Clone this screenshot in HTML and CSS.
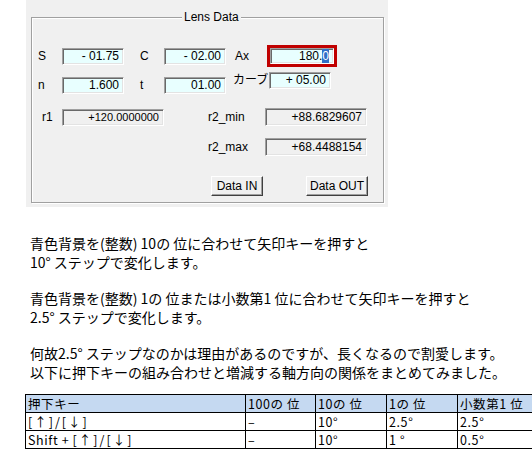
FILE: index.html
```html
<!DOCTYPE html>
<html lang="ja">
<head>
<meta charset="utf-8">
<title>Lens Data</title>
<link rel="stylesheet" href="styles.css">
</head>
<body>
<div class="dialog">
  <div class="group">
    <div class="legend">Lens Data</div>
    <div class="row row1">
      <span class="lbl l-s">S</span><span class="fld w62">- 01.75</span>
      <span class="lbl l-c">C</span><span class="fld w62">- 02.00</span>
      <span class="lbl l-ax">Ax</span>
      <span class="focus"><span class="fld full">180.<span class="sel">0</span></span></span>
    </div>
    <div class="row row2">
      <span class="lbl l-s">n</span><span class="fld w62">1.600</span>
      <span class="lbl l-c">t</span><span class="fld w62">01.00</span>
      <span class="lbl l-curve top">カーブ</span><span class="fld w62 top">+ 05.00</span>
    </div>
    <div class="row row3">
      <span class="lbl l-r1">r1</span><span class="fld ro w102 small">+120.0000000</span>
      <span class="lbl l-r2a">r2_min</span><span class="fld ro w102 tall">+88.6829607</span>
    </div>
    <div class="row row4">
      <span class="lbl l-r2b">r2_max</span><span class="fld ro w102 tall">+68.4488154</span>
    </div>
    <div class="row row5">
      <span class="btn b-in">Data IN</span>
      <span class="btn b-out">Data OUT</span>
    </div>
  </div>
</div>

<div class="notes">
  <p>青色背景を(整数) 10の 位に合わせて矢印キーを押すと<br>10° ステップで変化します。</p>
  <p>青色背景を(整数) 1の 位または小数第1 位に合わせて矢印キーを押すと<br>2.5° ステップで変化します。</p>
  <p>何故2.5° ステップなのかは理由があるのですが、長くなるので割愛します。<br>以下に押下キーの組み合わせと増減する軸方向の関係をまとめてみました。</p>
</div>

<table class="tbl">
  <colgroup>
    <col class="c1"><col class="c2"><col class="c3"><col class="c4"><col class="c5">
  </colgroup>
  <tr class="head"><td>押下キー</td><td>100の 位</td><td>10の 位</td><td>1の 位</td><td>小数第1 位</td></tr>
  <tr><td><span class="keys">[↑]/[↓]</span></td><td>–</td><td>10°</td><td>2.5°</td><td>2.5°</td></tr>
  <tr><td>Shift + <span class="keys">[↑]/[↓]</span></td><td>–</td><td>10°</td><td>1 °</td><td>0.5°</td></tr>
</table>
</body>
</html>
```
FILE: styles.css
```css
body {
  margin: 0;
  background: #fff;
  font-family: "Noto Sans CJK JP", sans-serif;
  color: #000;
}

.dialog {
  margin-left: 26px;
  width: 362px;
  height: 207px;
  background: #f0f0f0;
  padding: 17px 4px 0 5px;
  box-sizing: border-box;
}

.group {
  position: relative;
  height: 186px;
  border: 1px solid #a0a0a0;
  box-shadow: inset 1px 1px 0 #fff, 1px 1px 0 #fff;
  box-sizing: border-box;
  font-family: "Liberation Sans", "Noto Sans CJK JP", sans-serif;
  font-size: 12px;
}

.legend {
  position: absolute;
  left: 150px;
  top: -8px;
  padding: 0 2px;
  background: #f0f0f0;
  line-height: 15px;
  color: #000;
}

.row {
  display: flex;
  align-items: center;
}

.row1 { margin-top: 27px; height: 22px; }
.row2 { margin-top: 5px; height: 22px; align-items: flex-end; }
.row3 { margin-top: 14px; height: 18px; align-items: flex-end; }
.row4 { margin-top: 12px; height: 18px; }
.row5 { margin-top: 20px; height: 20px; }

.lbl {
  display: block;
  line-height: 17px;
  white-space: nowrap;
}
.top { align-self: flex-start; }

.l-s { margin-left: 6px; width: 24px; }
.l-c { margin-left: 16px; width: 24px; }
.l-ax { margin-left: 9px; width: 32px; }
.l-curve { margin-left: 7px; width: 36px; font-size: 12px; }
.l-r1 { margin-left: 10px; width: 20px; }
.l-r2a { margin-left: 44px; width: 57px; }
.l-r2b { margin-left: 176px; width: 57px; }

.fld {
  display: block;
  box-sizing: border-box;
  height: 17px;
  background: #e8ffff;
  border: 1px solid;
  border-color: #a0a0a0 #fff #fff #a0a0a0;
  box-shadow: inset 1px 1px 0 #696969, inset -1px -1px 0 #e3e3e3;
  text-align: right;
  padding-right: 4px;
  line-height: 15px;
  white-space: nowrap;
}
.w62 { width: 62px; }
.w102 { width: 102px; }
.ro { background: #f0f0f0; }
.tall { height: 18px; line-height: 16px; }
.small { font-size: 11px; }

.focus {
  display: block;
  box-sizing: border-box;
  width: 70px;
  height: 22px;
  border: 3px solid #c00000;
}
.full { height: 16px; width: 64px; }
.sel {
  background: #3070c8;
  color: #fff;
}

.btn {
  display: block;
  box-sizing: border-box;
  height: 20px;
  background: #f0f0f0;
  border: 1px solid;
  border-color: #fff #404040 #404040 #fff;
  box-shadow: inset -1px -1px 0 #a0a0a0;
  text-align: center;
  line-height: 18px;
}
.b-in { margin-left: 179px; width: 52px; }
.b-out { margin-left: 43px; width: 62px; }

.notes {
  margin: 27px 0 0 30px;
  font-size: 14px;
  line-height: 19px;
}
.notes p { margin: 0 0 17px; }
.notes p:last-child { margin-bottom: 0; }

.tbl {
  margin: 12px 0 0 25px;
  border-collapse: collapse;
  table-layout: fixed;
  width: 507px;
  font-size: 12.5px;
  letter-spacing: 0.6px;
}
.c1 { width: 220px; }
.c2 { width: 70px; }
.c3 { width: 71px; }
.c4 { width: 71px; }
.c5 { width: 75px; }
.tbl td {
  border: 1px solid #000;
  height: 17px;
  padding: 0 2px;
  line-height: 17px;
  white-space: nowrap;
  overflow: hidden;
}
.head td { background: #c5d9f1; }
.keys { letter-spacing: 2px; }
```
